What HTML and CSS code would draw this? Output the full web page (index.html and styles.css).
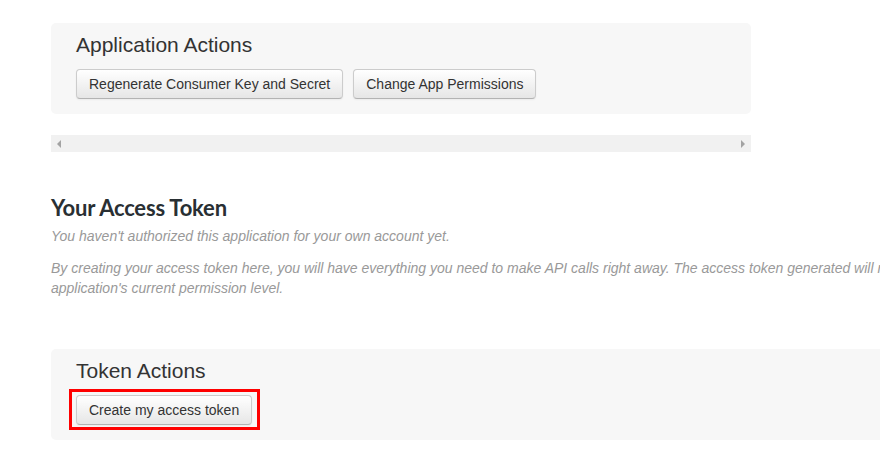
FILE: index.html
```html
<!DOCTYPE html>
<html lang="en">
<head>
<meta charset="utf-8">
<title>Application Actions</title>
<link rel="stylesheet" href="styles.css">
</head>
<body>
<div class="page">
  <section class="panel panel-app">
    <h3 class="panel-title">Application Actions</h3>
    <div class="actions">
      <button class="btn" type="button">Regenerate Consumer Key and Secret</button>
      <button class="btn" type="button">Change App Permissions</button>
    </div>
  </section>

  <div class="hscroll">
    <span class="arrow arrow-left"></span>
    <span class="arrow arrow-right"></span>
  </div>

  <section class="token">
    <h2 class="token-title">Your Access Token</h2>
    <p class="note">You haven't authorized this application for your own account yet.</p>
    <p class="note last">By creating your access token here, you will have everything you need to make API calls right away. The access token generated will reflect your application's current permission level.</p>
  </section>

  <section class="panel panel-token">
    <h3 class="panel-title">Token Actions</h3>
    <div class="actions">
      <span class="marker"><button class="btn" type="button">Create my access token</button></span>
    </div>
  </section>
</div>
</body>
</html>
```
FILE: styles.css
```css
html, body {
  margin: 0;
  padding: 0;
  background: #fff;
  overflow: hidden;
}

body {
  font-family: "Liberation Sans", Arial, sans-serif;
  font-size: 14px;
  line-height: 20px;
  color: #333;
}

.page {
  width: 920px;
  padding: 23px 0 0 51px;
}

.panel {
  background: #f7f7f7;
  border-radius: 5px;
  padding: 10px 25px 15px;
}

.panel-app {
  width: 650px;
}

.panel-title {
  margin: 0;
  font-size: 21px;
  line-height: 24px;
  font-weight: normal;
  color: #333;
}

.actions {
  display: flex;
  align-items: flex-start;
  gap: 10px;
  margin-top: 12px;
}

.btn {
  font-family: "Liberation Sans", Arial, sans-serif;
  font-size: 14px;
  line-height: 20px;
  color: #333;
  padding: 4px 12px;
  background: linear-gradient(#ffffff, #e6e6e6);
  border: 1px solid #cccccc;
  border-bottom-color: #b3b3b3;
  border-radius: 4px;
  box-shadow: inset 0 1px 0 rgba(255, 255, 255, 0.2), 0 1px 2px rgba(0, 0, 0, 0.05);
  cursor: pointer;
}

.marker {
  display: flex;
  border: 3px solid #ff0000;
  padding: 3px 5px 2px 4px;
  margin: -6px 0 -5px -7px;
}

.hscroll {
  width: 700px;
  height: 17px;
  margin-top: 21px;
  background: #f1f1f1;
  display: flex;
  align-items: center;
  justify-content: space-between;
  padding: 0 6px;
  box-sizing: border-box;
}

.arrow {
  width: 0;
  height: 0;
  border-top: 4px solid transparent;
  border-bottom: 4px solid transparent;
}

.arrow-left {
  border-right: 4px solid #a3a3a3;
}

.arrow-right {
  border-left: 4px solid #a3a3a3;
}

.token {
  margin-top: 43px;
}

.token-title {
  margin: 0 0 5px;
  font-family: Lato, "Liberation Sans", sans-serif;
  font-weight: bold;
  font-size: 22px;
  line-height: 26px;
  letter-spacing: -0.2px;
  color: #292f33;
}

.note {
  margin: 0 0 12px;
  font-style: italic;
  color: #999;
}

.note.last {
  margin-bottom: 0;
}

.panel-token {
  margin-top: 51px;
}
```
